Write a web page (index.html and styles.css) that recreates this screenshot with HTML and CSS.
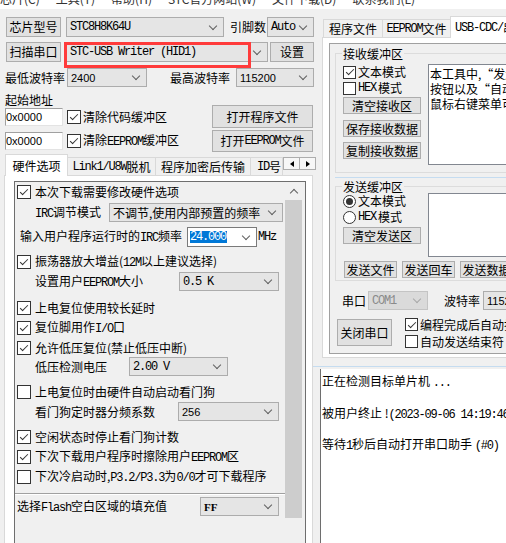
FILE: index.html
```html
<!DOCTYPE html>
<html lang="zh-CN">
<head>
    <meta charset="UTF-8">
    <meta name="viewport" content="width=device-width, initial-scale=1.0">
    <title>STC-ISP</title>
    <link rel="stylesheet" href="styles.css">
</head>
<body>
<div class="app">
    <div class="menubar">
        <span>芯片(C)</span><span>工具(T)</span><span>帮助(H)</span><span>STC官方网站(W)</span><span>文件下载(D)</span><span>联系我们(L)</span>
    </div>
    <div class="main">
        <!-- left column: chip / port / hardware options -->
        <div class="left">
            <div class="row r1">
                <button class="btn b-side">芯片型号</button>
                <div class="combo c-chip"><span class="en">STC8H8K64U</span></div>
                <span class="lbl l-pins">引脚数</span>
                <div class="combo c-pins"><span class="en">Auto</span></div>
            </div>
            <div class="row r2">
                <button class="btn b-side">扫描串口</button>
                <div class="combo c-port"><span class="en">STC-USB Writer (HID1)</span></div>
                <button class="btn b-set">设置</button>
                <div class="mark"></div>
            </div>
            <div class="row r3">
                <span class="lbl l-min">最低波特率</span>
                <div class="combo c-min"><span class="num">2400</span></div>
                <span class="lbl l-max">最高波特率</span>
                <div class="combo c-max"><span class="num">115200</span></div>
            </div>
            <div class="lbl l-addr">起始地址</div>
            <div class="row r5">
                <div class="edit"><span class="num">0x0000</span></div>
                <span class="cb big on"></span><span class="cbt">清除代码缓冲区</span>
                <button class="btn b-open">打开程序文件</button>
            </div>
            <div class="row r6">
                <div class="edit"><span class="num">0x0000</span></div>
                <span class="cb big on"></span><span class="cbt">清除<span class="en">EEPROM</span>缓冲区</span>
                <button class="btn b-open">打开<span class="en">EEPROM</span>文件</button>
            </div>

            <div class="tabs">
                <div class="tab sel">硬件选项</div>
                <div class="tab t2"><span class="en">Link1/U8W</span>脱机</div>
                <div class="tab t3">程序加密后传输</div>
                <div class="tab t4"><span class="en">ID</span>号</div>
                <div class="ta l"></div>
                <div class="ta r"></div>
            </div>
            <div class="panel">
                <div class="opts">
                    <div class="opt-list">
                        <div class="o"><span class="cb big on"></span><span class="ct">本次下载需要修改硬件选项</span></div>
                        <div class="o o-sel mt1"><span class="ol w-irc"><span class="en">IRC</span>调节模式</span><div class="combo c-irc">不调节,使用内部预置的频率</div></div>
                        <div class="o mt5 o-freq"><span class="ol w-freq">输入用户程序运行时的<span class="en">IRC</span>频率</span><div class="ecombo"><span class="hl en">24.000</span></div><span class="en mhz">MHz</span></div>
                        <div class="o mt5"><span class="cb big on"></span><span class="ct">振荡器放大增益(<span class="en">12M</span>以上建议选择)</span></div>
                        <div class="o o-sel"><span class="ol w-eep">设置用户<span class="en">EEPROM</span>大小</span><div class="combo c-eep"><span class="en">0.5 K</span></div></div>
                        <div class="o mt7"><span class="cb big on"></span><span class="ct">上电复位使用较长延时</span></div>
                        <div class="o"><span class="cb big on"></span><span class="ct">复位脚用作<span class="en">I/O</span>口</span></div>
                        <div class="o o-19"><span class="cb big on"></span><span class="ct">允许低压复位(禁止低压中断)</span></div>
                        <div class="o o-sel"><span class="ol w-volt">低压检测电压</span><div class="combo c-volt"><span class="en">2.00 V</span></div></div>
                        <div class="o mt6"><span class="cb big"></span><span class="ct">上电复位时由硬件自动启动看门狗</span></div>
                        <div class="o o-sel"><span class="ol w-wdt">看门狗定时器分频系数</span><div class="combo c-wdt"><span class="num">256</span></div></div>
                        <div class="o mt6"><span class="cb big on"></span><span class="ct">空闲状态时停止看门狗计数</span></div>
                        <div class="o"><span class="cb big on"></span><span class="ct">下次下载用户程序时擦除用户<span class="en">EEPROM</span>区</span></div>
                        <div class="o"><span class="cb big"></span><span class="ct">下次冷启动时,<span class="en">P3.2/P3.3</span>为<span class="en">0/0</span>才可下载程序</span></div>
                        <div class="sep"></div>
                        <div class="o o-sel o-flash"><span class="ol w-flash">选择<span class="en">Flash</span>空白区域的填充值</span><div class="combo c-ff"><span class="ff">FF</span></div></div>
                    </div>
                    <div class="vscroll">
                        <div class="up"></div>
                        <div class="thumb"></div>
                    </div>
                </div>
            </div>
        </div>

        <!-- right column: serial assistant + log -->
        <div class="right">
            <div class="rtabs">
                <div class="rtab rt1">程序文件</div>
                <div class="rtab rt2"><span class="en">EEPROM</span>文件</div>
                <div class="rtab rt3 sel"><span class="en">USB-CDC/</span>串口助手</div>
            </div>
            <div class="rpage">
                <div class="sunk">
                    <div class="grp g-recv">
                        <div class="grp-t">接收缓冲区</div>
                        <div class="grp-body">
                            <div class="gcol">
                                <div class="ck"><span class="cb on"></span>文本模式</div>
                                <div class="ck"><span class="cb"></span><span class="en">HEX</span>模式</div>
                                <button class="btn gb gb1">清空接收区</button>
                                <button class="btn gb gb2">保存接收数据</button>
                                <button class="btn gb gb3">复制接收数据</button>
                            </div>
                            <div class="memo m-recv">
                                <div>本工具中,“发送数据”</div>
                                <div>按钮以及“自动发送”</div>
                                <div>鼠标右键菜单可以使用</div>
                            </div>
                        </div>
                    </div>
                    <div class="split"></div>
                    <div class="grp g-send">
                        <div class="grp-t">发送缓冲区</div>
                        <div class="grp-body">
                            <div class="gcol">
                                <div class="ck"><span class="rb on"></span>文本模式</div>
                                <div class="ck"><span class="rb"></span><span class="en">HEX</span>模式</div>
                                <button class="btn gb gb4">清空发送区</button>
                            </div>
                            <div class="memo m-send"></div>
                        </div>
                        <div class="send-btns">
                            <button class="btn sb">发送文件</button>
                            <button class="btn sb">发送回车</button>
                            <button class="btn sb">发送数据</button>
                        </div>
                    </div>
                    <div class="row port">
                        <span class="lbl l-com">串口</span>
                        <div class="combo dis c-com"><span class="en">COM1</span></div>
                        <span class="lbl l-baud">波特率</span>
                        <div class="combo c-baud"><span class="num">115200</span></div>
                    </div>
                    <div class="row closerow">
                        <button class="btn b-close">关闭串口</button>
                        <div class="ckcol">
                            <div class="ck"><span class="cb on"></span>编程完成后自动打开串口</div>
                            <div class="ck"><span class="cb"></span>自动发送结束符</div>
                        </div>
                    </div>
                </div>
            </div>
            <div class="split2"></div>
            <div class="log">
                <div>正在检测目标单片机 <span class="en">...</span></div>
                <div>&nbsp;</div>
                <div>被用户终止 !<span class="en">(2023-09-06 14:19:46)</span></div>
                <div>&nbsp;</div>
                <div>等待<span class="en">1</span>秒后自动打开串口助手 <span class="en">(#0)</span></div>
            </div>
        </div>
    </div>
</div>
</body>
</html>
```

FILE: styles.css
```css
* {
    box-sizing: border-box;
}
html, body {
    margin: 0;
    padding: 0;
}
body {
    background-color: #f0f0f0;
    font-family: "Noto Sans CJK SC", "Noto Sans", sans-serif;
    font-size: 12px;
    line-height: 14px;
    color: #000;
}
.app {
    width: 506px;
    height: 543px;
    overflow: hidden;
}
.en {
    font-family: "Liberation Mono", monospace;
    font-size: 12px;
    letter-spacing: -1.2px;
}
.num {
    font-family: "Liberation Sans", sans-serif;
    font-size: 11px;
}
.ff {
    font-family: "Liberation Serif", serif;
    font-weight: bold;
    font-size: 11px;
}

/* menu bar, cut off at the top of the shot */
.menubar {
    display: flex;
    align-items: flex-start;
    height: 9px;
    overflow: hidden;
    white-space: nowrap;
    background-color: #fff;
    color: #333;
}
.menubar span {
    margin-top: -8px;
    margin-right: 16px;
    line-height: 14px;
    flex-shrink: 0;
}

.main {
    display: flex;
    margin-top: 1px;
}

/* common controls */
.btn {
    display: flex;
    align-items: center;
    justify-content: center;
    padding: 0;
    margin: 0;
    font: inherit;
    color: #000;
    background-color: #e1e1e1;
    border: 1px solid #adadad;
    white-space: nowrap;
    flex-shrink: 0;
}
.combo {
    display: flex;
    align-items: center;
    justify-content: space-between;
    height: 20px;
    padding-left: 3px;
    background-color: #e5e5e5;
    border: 1px solid #acacac;
    white-space: nowrap;
    flex-shrink: 0;
}
.combo::after,
.ecombo::after {
    content: "";
    width: 5px;
    height: 5px;
    border-right: 1px solid #606060;
    border-bottom: 1px solid #606060;
    transform: rotate(45deg);
    margin: -3px 7px 0 0;
    flex-shrink: 0;
}
.combo.dis {
    background-color: #dadada;
    border-color: #c4c4c4;
    color: #8a8a8a;
}
.combo.dis::after {
    border-color: #a8a8a8;
}
.lbl {
    white-space: nowrap;
    flex-shrink: 0;
}
.cb {
    display: inline-flex;
    align-items: center;
    justify-content: center;
    width: 13px;
    height: 13px;
    border: 1px solid #333;
    background-color: #fff;
    flex-shrink: 0;
}
.cb.big {
    width: 14px;
    height: 14px;
}
.cb.on::after {
    content: "";
    width: 3px;
    height: 7px;
    border-right: 1.5px solid #333;
    border-bottom: 1.5px solid #333;
    transform: rotate(45deg);
    margin-top: -2px;
}
.rb {
    display: inline-flex;
    align-items: center;
    justify-content: center;
    width: 13px;
    height: 13px;
    border: 1px solid #333;
    border-radius: 50%;
    background-color: #fff;
    flex-shrink: 0;
}
.rb.on::after {
    content: "";
    width: 7px;
    height: 7px;
    border-radius: 50%;
    background-color: #333;
}

/* left column */
.left {
    width: 316px;
    flex-shrink: 0;
    padding-top: 7px;
}
.row {
    display: flex;
    align-items: center;
    position: relative;
}
.r1, .r2 {
    height: 20px;
}
.r2 {
    margin-top: 5px;
}
.r3 {
    height: 19px;
    margin-top: 6px;
}
.b-side {
    width: 55px;
    height: 20px;
    margin-left: 6px;
}
.c-chip {
    width: 158px;
    margin-left: 5px;
}
.l-pins {
    width: 36px;
    margin-left: 6px;
}
.c-pins {
    width: 47px;
    margin-left: 1px;
}
.c-port {
    width: 202px;
    margin-left: 5px;
}
.b-set {
    width: 44px;
    height: 20px;
    margin-left: 2px;
}
.mark {
    position: absolute;
    left: 64px;
    top: 0;
    width: 187px;
    height: 26px;
    border: 3px solid #ff3b3b;
}
.l-min {
    width: 60px;
    margin-left: 5px;
}
.c-min {
    width: 80px;
    height: 19px;
    margin-left: 2px;
}
.l-max {
    width: 60px;
    margin-left: 23px;
}
.c-max {
    width: 78px;
    height: 19px;
    margin-left: 6px;
}
.l-addr {
    margin: 6px 0 0 5px;
    height: 14px;
}
.r5 {
    height: 23px;
    margin-top: -2px;
}
.r6 {
    height: 22px;
    margin-top: 2px;
}
.edit {
    width: 58px;
    height: 18px;
    margin-left: 5px;
    display: flex;
    align-items: center;
    background-color: #fff;
    border: 1px solid #a0a0a0;
    border-right-color: #e3e3e3;
    border-bottom-color: #e3e3e3;
    flex-shrink: 0;
}
.r5 .cb, .r6 .cb {
    margin-left: 4px;
}
.cbt {
    margin-left: 2px;
    white-space: nowrap;
}
.b-open {
    width: 101px;
    height: 100%;
    margin-left: auto;
    margin-right: 3px;
}

/* left tab control */
.tabs {
    display: flex;
    align-items: flex-end;
    height: 21px;
    margin-top: 2px;
    padding-left: 5px;
}
.tab {
    display: flex;
    align-items: center;
    justify-content: center;
    height: 18px;
    margin-left: -1px;
    background-color: #f0f0f0;
    border: 1px solid #d9d9d9;
    border-bottom: none;
    white-space: nowrap;
    flex-shrink: 0;
}
.tab.sel {
    width: 63px;
    height: 22px;
    margin-left: 0;
    margin-bottom: -1px;
    background-color: #fff;
    position: relative;
    z-index: 1;
}
.t2 {
    width: 89px;
}
.t3 {
    width: 96px;
}
.t4 {
    width: 33px;
    overflow: hidden;
    justify-content: flex-start;
    padding-left: 6px;
}
.ta {
    display: flex;
    align-items: center;
    justify-content: center;
    width: 17px;
    height: 13px;
    margin-bottom: 5px;
    background-color: #f7f7f7;
    border: 1px solid #adadad;
    flex-shrink: 0;
}
.ta.r {
    margin-left: -1px;
}
.ta::after {
    content: "";
    border-style: solid;
}
.ta.l::after {
    border-width: 3.5px 4px 3.5px 0;
    border-color: transparent #000 transparent transparent;
}
.ta.r::after {
    border-width: 3.5px 0 3.5px 4px;
    border-color: transparent transparent transparent #000;
}
.panel {
    width: 309px;
    height: 380px;
    margin-left: 4px;
    padding: 5px 0 0 9px;
    background-color: #fff;
    border: 1px solid #d9d9d9;
}
.opts {
    display: flex;
    width: 292px;
    height: 370px;
    background-color: #f0f0f0;
    border: 1px solid #6e6e6e;
}
.opt-list {
    width: 270px;
    flex-shrink: 0;
}
.o {
    display: flex;
    align-items: center;
    height: 20px;
    padding-left: 2px;
    white-space: nowrap;
}
.o .cb {
    margin-right: 4px;
}
.o-sel {
    height: 19px;
}
.o-19 {
    height: 19px;
}
.mt1 { margin-top: 1px; }
.mt5 { margin-top: 5px; }
.mt6 { margin-top: 6px; }
.mt7 { margin-top: 7px; }
.ol {
    flex-shrink: 0;
    padding-left: 18px;
}
.w-irc { width: 92px; }
.w-eep { width: 162px; }
.w-volt { width: 112px; }
.w-wdt { width: 161px; }
.o-freq .ol {
    width: 170px;
    padding-left: 3px;
}
.o-flash {
    margin-top: 2px;
}
.o-flash .ol {
    width: 183px;
    padding-left: 0;
}
.o-sel .combo {
    height: 19px;
}
.c-irc { width: 174px; }
.c-eep { width: 100px; }
.c-volt { width: 99px; }
.c-wdt { width: 101px; }
.c-ff { width: 79px; }
.ecombo {
    display: flex;
    align-items: center;
    justify-content: space-between;
    width: 70px;
    height: 20px;
    padding-left: 2px;
    background-color: #fff;
    border: 1px solid #7a7a7a;
    flex-shrink: 0;
}
.hl {
    background-color: #0078d7;
    color: #fff;
    line-height: 12px;
    padding-right: 1px;
}
.mhz {
    margin-left: 1px;
}
.sep {
    height: 2px;
    margin-top: 6px;
    border-top: 1px solid #a0a0a0;
    border-bottom: 1px solid #fff;
}
.vscroll {
    width: 17px;
    background-color: #f0f0f0;
    flex-shrink: 0;
}
.up {
    display: flex;
    align-items: center;
    justify-content: center;
    height: 18px;
}
.up::after {
    content: "";
    width: 5px;
    height: 5px;
    border-left: 1px solid #606060;
    border-top: 1px solid #606060;
    transform: rotate(45deg);
    margin-top: 3px;
}
.thumb {
    height: 318px;
    background-color: #cdcdcd;
}

/* right column */
.right {
    width: 300px;
    flex-shrink: 0;
    padding-top: 6px;
}
.rtabs {
    display: flex;
    align-items: flex-end;
    height: 21px;
    padding-left: 7px;
}
.rtab {
    display: flex;
    align-items: center;
    justify-content: center;
    height: 18px;
    background-color: #f0f0f0;
    border: 1px solid #d9d9d9;
    border-bottom: none;
    white-space: nowrap;
    flex-shrink: 0;
}
.rt1 { width: 60px; }
.rt2 { width: 69px; margin-left: -1px; }
.rt3 {
    width: 110px;
    height: 22px;
    margin-left: -1px;
    margin-bottom: -1px;
    justify-content: flex-start;
    padding-left: 4px;
    background-color: #fff;
    position: relative;
    z-index: 1;
}
.rpage {
    width: 290px;
    height: 321px;
    margin-left: 6px;
    padding: 5px 0 0 6px;
    background-color: #fff;
    border: 1px solid #d9d9d9;
}
.sunk {
    height: 311px;
    padding: 9px 0 0 5px;
    background-color: #f0f0f0;
    border: 1px solid #a0a0a0;
}
.grp {
    border: 1px solid #dcdcdc;
    white-space: nowrap;
}
.g-recv {
    height: 120px;
}
.g-send {
    height: 95px;
    margin-top: 8px;
}
.grp-t {
    width: fit-content;
    height: 13px;
    line-height: 13px;
    margin: -7px 0 0 6px;
    padding: 0 1px;
    background-color: #f0f0f0;
}
.grp-body {
    display: flex;
    padding-left: 7px;
}
.g-recv .grp-body {
    margin-top: 4px;
}
.gcol {
    display: flex;
    flex-direction: column;
    width: 78px;
    flex-shrink: 0;
}
.ck {
    display: flex;
    align-items: center;
    gap: 2px;
    height: 16px;
    white-space: nowrap;
}
.gb {
    width: 78px;
    height: 17px;
}
.gb1 { margin-top: 1px; }
.gb2 { margin-top: 6px; }
.gb3 { margin-top: 5px; }
.gb4 { margin-top: 2px; }
.memo {
    width: 200px;
    margin-left: 7px;
    padding: 1px 0 0 1px;
    line-height: 15px;
    background-color: #fff;
    border: 1px solid #828790;
    flex-shrink: 0;
}
.m-recv { height: 101px; }
.m-send { height: 64px; }
.split {
    height: 1px;
    margin: 4px 0 0 0;
    background-color: #c5dcf0;
}
.send-btns {
    display: flex;
    gap: 5px;
    margin-top: 4px;
    padding-left: 8px;
}
.sb {
    width: 53px;
    height: 17px;
}
.port {
    height: 19px;
    margin-top: 10px;
}
.l-com {
    width: 24px;
    margin-left: 7px;
}
.c-com {
    width: 60px;
    height: 19px;
    margin-left: 2px;
}
.l-baud {
    width: 36px;
    margin-left: 16px;
}
.c-baud {
    width: 80px;
    height: 19px;
    margin-left: 3px;
}
.closerow {
    height: 28px;
    margin-top: 8px;
    align-items: flex-start;
}
.b-close {
    width: 55px;
    height: 27px;
    margin: 1px 0 0 2px;
}
.ckcol {
    margin: -2px 0 0 13px;
}
.ckcol .ck {
    height: 17px;
}
.split2 {
    height: 1px;
    margin-top: 8px;
    margin-left: -3px;
    background-color: #c5dcf0;
}
.log {
    height: 200px;
    margin: 2px 0 0 4px;
    padding: 5px 0 0 1px;
    line-height: 14.75px;
    white-space: nowrap;
    background-color: #fff;
    border-left: 1px solid #6e6e6e;
}
```
